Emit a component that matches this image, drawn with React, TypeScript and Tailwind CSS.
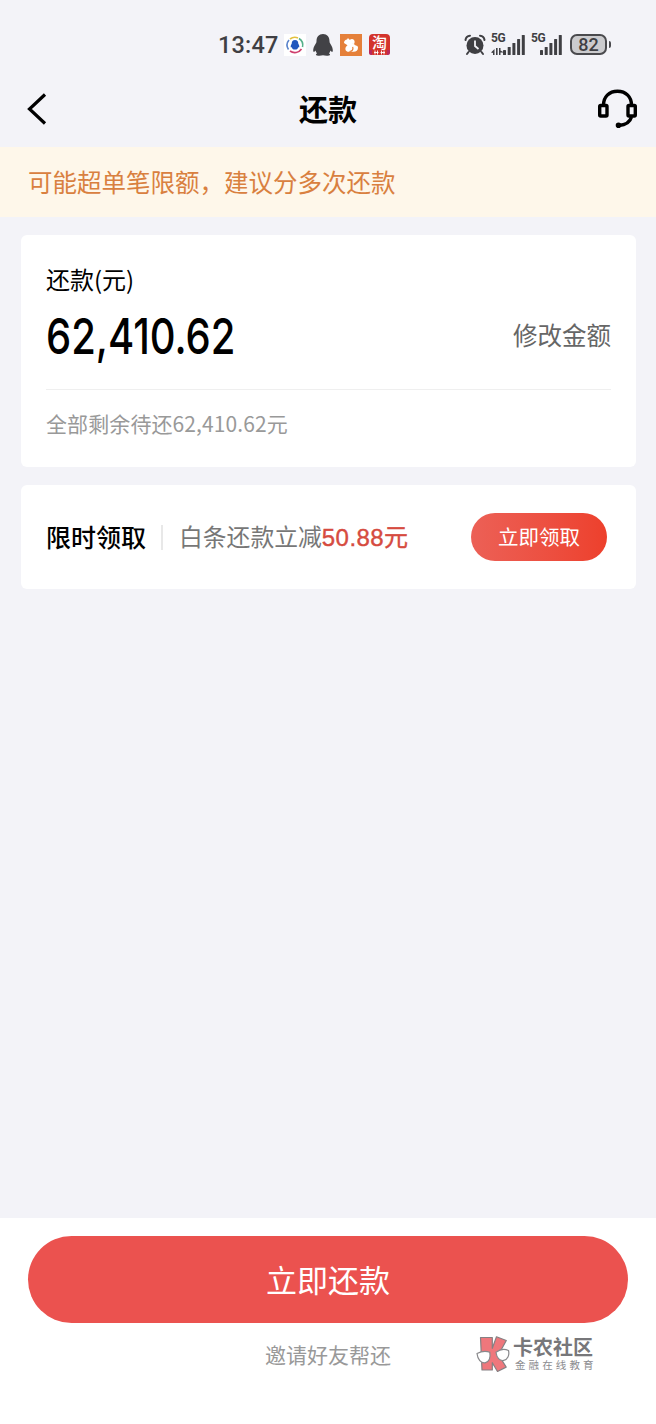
import React from 'react';

const SIGNAL_BARS = [5, 8, 12, 16, 20];

const SignalBars: React.FC = () => (
  <svg className="absolute bottom-0 right-0" width="22" height="20" viewBox="0 0 22 20" fill="#3f3f43">
    {SIGNAL_BARS.map((h, i) => (
      <rect key={i} x={i * 4.7} y={20 - h} width="3" height={h} rx="0.6" />
    ))}
  </svg>
);

const StatusBar: React.FC = () => (
  <div className="flex h-[74px] items-center pt-[15px] pl-[218px] pr-[45px] text-[#3f3f43]">
    <span className="w-[66px] pt-[2px] font-['Roboto'] text-[23.5px] font-medium leading-none tracking-[0.2px]">13:47</span>
    <div className="flex items-center">
      <svg width="22" height="22" viewBox="0 0 22 22">
        <rect width="22" height="22" fill="#fff" />
        <g fill="none" strokeWidth="1.6">
          <path d="M4.500 15.500A8 8 0 0 1 5 6" stroke="#5a83cc" />
          <path d="M6 5A8 8 0 0 1 14 4" stroke="#e3c13f" />
          <path d="M15 4.500A8 8 0 0 1 18.500 13" stroke="#55b08a" />
          <path d="M17.500 15A8 8 0 0 1 6 17" stroke="#cf3f6e" />
        </g>
        <path d="M11 6c-2.400 0-3.300 1.700-3.300 3.800-.9 1.200-1.300 2.700-.8 3.700l1-.3c.2 1.600 1 2.300 3.100 2.300s2.900-.7 3.100-2.300l1 .3c.5-1 .1-2.500-.8-3.700C14.300 7.700 13.400 6 11 6z" fill="#2257bd" />
      </svg>
      <svg className="ml-[7px]" width="20" height="22" viewBox="0 0 20 22" fill="#424246">
        <path d="M10 0C5.900 0 3.500 3 3.500 7.300c0 .9-.2 1.500-.7 2.300C1.100 12.200 0 14.800.2 17c.1 1 .8 1.100 1.500.4l.8-.8c.3 1.100.8 2 1.500 2.800-.8.4-1.200.9-1 1.500.3 1 4.900.9 7 .4 2.100.5 6.700.6 7-.4.2-.6-.2-1.100-1-1.500.7-.8 1.200-1.700 1.500-2.800l.8.8c.7.7 1.400.6 1.500-.4.2-2.200-.9-4.800-2.600-7.400-.5-.8-.7-1.400-.7-2.300C16.500 3 14.100 0 10 0z" />
      </svg>
      <svg className="ml-[7px]" width="22" height="22" viewBox="0 0 22 22">
        <rect width="22" height="22" fill="#e5803a" />
        <path d="M4 9C4 7 5.500 5.500 7 5.500L8 4l1.200 1.500c2.300.4 3.500 2 3.500 4.200C14 10 15 10.500 15.700 11.500c1.300 0 2.300.8 2.300 2.300 0 2.500-1.800 4-4.500 4H7.500c-1.800-.7-2.400-2.300-2-4 .3-1 1-1.900 2-2.600L4 9z" fill="#fff" />
        <path d="M9.500 17.500c2.800-.3 4-2 3.200-4.700" fill="none" stroke="#e5803a" strokeWidth="1.200" />
        <path d="M9.800 6c1.200-1.300 3.200-1.200 4.200 0 .9 1.300.8 2.700 0 4l-1.800-.2z" fill="#fff" />
      </svg>
      <div className="ml-[7px] flex h-[21px] w-[21px] flex-col items-center rounded-[4px] bg-[#d3332c] font-['Noto_Sans_CJK_SC',sans-serif] text-[15px] font-medium leading-[16px] text-white">
        <span>淘</span>
        <svg className="shrink-0" width="21" height="5" viewBox="0 0 21 5">
          <path d="M0 0h3v5H2a2 2 0 0 1-2-2zM18 0h3v3a2 2 0 0 1-2 2h-1z" fill="#b8285c" />
          <path d="M6 .5v4M8.500 .5v4M12.500 .5v4M15 .5v4M5 2.500h4.500M11.500 2.500H16" stroke="#fff" strokeWidth="0.900" />
        </svg>
      </div>
    </div>
    <div className="ml-auto flex items-center">
      <svg width="22" height="22" viewBox="0 0 22 22">
        <circle cx="11" cy="11.500" r="8.500" fill="#3f3f43" />
        <path d="M1.500 6a5 5 0 0 1 4.500-4.300M20.500 6a5 5 0 0 0-4.500-4.300M4.500 18l-1.500 2M17.500 18l1.500 2" fill="none" stroke="#3f3f43" strokeWidth="2" strokeLinecap="round" />
        <path d="M11 6.500v5.500l3.500 3" fill="none" stroke="#f3f3f8" strokeWidth="1.800" />
      </svg>
      <div className="relative ml-[5px] h-[21px] w-[34px] font-['Roboto'] text-[12px] font-bold leading-[9px] tracking-[-0.5px]">
        5G
        <svg className="absolute bottom-0 left-0" width="13" height="7" viewBox="0 0 13 7" fill="#3f3f43">
          <path d="M0 4.500L3.500 1v6H2V5zM5 0h1.600v7H5zM8 0h1.500v2.500L13 4.500H9.500V7H8z" />
        </svg>
        <SignalBars />
      </div>
      <div className="relative ml-[6px] h-[21px] w-[31px] font-['Roboto'] text-[12px] font-bold leading-[9px] tracking-[-0.5px]">
        5G
        <SignalBars />
      </div>
      <div className="ml-2 flex h-[21px] w-[37px] items-center justify-center rounded-[7px] border-2 border-[#4a4a4e] bg-[#cbcbce] font-['Roboto'] text-[18px] font-medium leading-none">
        82
      </div>
      <div className="ml-[2px] h-[7px] w-[2px] rounded-r bg-[#4a4a4e]" />
    </div>
  </div>
);

const Header: React.FC = () => (
  <div className="grid h-[73px] grid-cols-[1fr_auto_1fr] items-center pb-1 pl-[27px] pr-[18px]">
    <svg width="40" height="32" viewBox="0 0 40 32" fill="none" stroke="#000" strokeWidth="3.200">
      <path d="M18 1.500L2.500 16 18 30.500" />
    </svg>
    <h1 className="mr-[9px] text-[29px] font-bold leading-none">还款</h1>
    <svg className="justify-self-end" width="40" height="40" viewBox="0 0 40 40" fill="none" stroke="#000" strokeWidth="3.400">
      <path d="M5.500 17v-1C5.500 8 11 2.200 19.500 2.200S33.500 8 33.500 16v1" />
      <rect x="1.700" y="16.500" width="7.300" height="10.500" rx="1" />
      <rect x="30" y="16.500" width="7.300" height="10.500" rx="1" />
      <path d="M33.500 28c-1.500 5-5.500 8-12.500 8.500" />
      <circle cx="20.500" cy="36.300" r="1.100" fill="#000" />
    </svg>
  </div>
);

const Watermark: React.FC = () => (
  <div className="absolute left-[476px] top-[118px] flex text-[#77777a]">
    <svg width="34" height="37" viewBox="0 0 34 37">
      <path
        d="M4.500 1.500h11.800v10.800L20.500 .800l9.800 3.700-7.800 14.300 7.700 12.300-8.700 4.400-5.200-8.800V34H6z"
        fill="#ef777c"
        stroke="#858083"
        strokeWidth="1.200"
        strokeLinejoin="round"
      />
      <g fill="#fff" stroke="#88888b" strokeWidth="1.200">
        <path d="M1 17.500c4.500-2.300 9.500-2.500 12.800-1.200 1 5.300-.5 9.700-4.800 10.500-4 .6-7.300-3.300-8-9.300z" />
        <path d="M20 16.300c4-3 8.500-3.600 12.500-1.800 1.200 5-1 9.300-4.800 9.900-4.100.6-7.100-2.600-7.700-8.100z" />
      </g>
    </svg>
    <div className="ml-[3px]">
      <div className="whitespace-nowrap text-[20px] font-bold leading-[21px]">卡农社区</div>
      <div className="mt-[2px] whitespace-nowrap pl-[2px] text-[10.5px] leading-[12px] tracking-[3.100px] text-[#8c8c8f]">金融在线教育</div>
    </div>
  </div>
);

export default function App() {
  return (
    <div className="flex h-[1424px] w-[656px] flex-col overflow-hidden bg-[#f3f3f8] font-['Noto_Sans_CJK_SC',sans-serif] text-black">
      <StatusBar />
      <Header />

      <div className="flex h-[70px] items-center bg-[#fef7ea] pl-7 text-[24.5px] leading-none text-[#d9803f]">
        可能超单笔限额，建议分多次还款
      </div>

      <div className="ml-[21px] mr-5 mt-[18px] h-[232px] rounded-md bg-white px-[25px] pt-[30px]">
        <div className="text-[24px] leading-[28px]">还款(元)</div>
        <div className="mt-[12px] flex h-[60px] items-center justify-between">
          <span className="w-[200px] origin-left scale-x-[0.8] whitespace-nowrap pt-[1px] font-['Inter'] text-[50px] font-medium leading-none">
            62,410.62
          </span>
          <span className="text-[24.5px] leading-none text-[#666]">修改金额</span>
        </div>
        <div className="mt-[24px] border-t border-[#efefef]" />
        <div className="mt-[21px] text-[21px] leading-[24px] tracking-[0.1px] text-[#999]">全部剩余待还62,410.62元</div>
      </div>

      <div className="ml-[21px] mr-5 mt-[18px] flex h-[104px] items-center rounded-md bg-white pl-[25px] pr-[29px]">
        <span className="pb-[2px] text-[25px] font-medium leading-none">限时领取</span>
        <span className="ml-[15px] h-[25px] w-[2px] bg-[#e8e8e8]" />
        <span className="ml-4 text-[23.8px] leading-none text-[#777]">
          白条还款立减
          <span className="font-['Liberation_Sans','Noto_Sans_CJK_SC',sans-serif] text-[24px] tracking-[0.45px] text-[#d64b40] [-webkit-text-stroke:0.4px_#d64b40]">50.88元</span>
        </span>
        <button className="ml-auto h-[48px] w-[136px] rounded-full bg-gradient-to-r from-[#ec6056] to-[#ed402c] pb-[2px] text-[20.5px] leading-none text-white">
          立即领取
        </button>
      </div>

      <div className="relative mt-auto h-[206px] bg-white px-7 pt-[18px]">
        <button className="h-[87px] w-[600px] rounded-full bg-[#eb524f] pb-[3px] text-[31px] leading-none text-white">
          立即还款
        </button>
        <div className="mt-[19px] text-center text-[21px] leading-[24px] text-[#999]">邀请好友帮还</div>
        <Watermark />
      </div>
    </div>
  );
}
